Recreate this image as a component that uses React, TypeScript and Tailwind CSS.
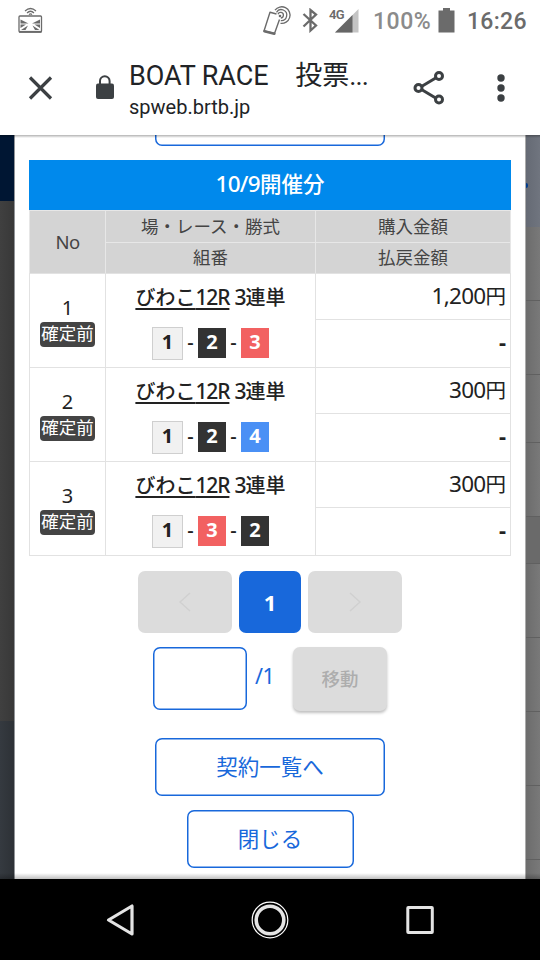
const bets = [
  { no: 1, boats: [1, 2, 3], amount: "1,200" },
  { no: 2, boats: [1, 2, 4], amount: "300" },
  { no: 3, boats: [1, 3, 2], amount: "300" },
];

const boatStyles: Record<number, string> = {
  1: "h-[33px] w-[31px] border border-[#cfcfcf] bg-[#f1f1f1] text-[#222]",
  2: "h-[30px] w-7 bg-[#333] text-white",
  3: "h-[30px] w-7 bg-[#f26161] text-white",
  4: "h-[30px] w-7 bg-[#4a90f5] text-white",
};

function StatusBar() {
  return (
    <div className="flex h-[42px] shrink-0 items-start font-['Roboto','Noto_Sans_CJK_JP',sans-serif] text-[#6b6b6b]">
      <svg className="mt-[7px] ml-[18px]" width="25" height="28" viewBox="0 0 25 28" fill="none" stroke="#6b6b6b">
        <path d="M7 4Q12.500-1 18 4M9 6Q12.500 2.500 16 6M11 7.700Q12.500 6.200 14 7.700" strokeWidth="1.200" />
        <rect x="1" y="9" width="22.500" height="16" rx="1" strokeWidth="1.300" />
        <path d="M2.500 12.500L10.500 16.500H2.500zM22 12.500L14 16.500H22zM2.500 17.500H8L2.500 21zM22 17.500H16.500L22 21zM3 23L10 18.500L7.500 23zM21.500 23L14.500 18.500L17 23z" fill="#6b6b6b" stroke="none" />
        <path d="M1 24.800H23.500" strokeWidth="1.800" />
      </svg>
      <svg className="mt-[5px] ml-[219px]" width="32" height="32" viewBox="0 0 32 32" fill="none" stroke="#6b6b6b">
        <path d="M14.500 9L8 7.300L2 26L12.500 28.500L17.500 14.500" strokeWidth="1.400" strokeLinejoin="round" />
        <path d="M2.500 26.300L12.300 28.800" strokeWidth="2.600" strokeLinecap="round" />
        <path d="M13 5.200A8.300 8.300 0 1 1 18.500 18.300M14.500 7.300A5.500 5.500 0 1 1 18.800 15.600M16 9.200A2.800 2.800 0 1 1 18.800 13" strokeWidth="1.300" />
        <circle cx="18" cy="11" r="1.300" fill="#6b6b6b" stroke="none" />
      </svg>
      <svg className="mt-2 ml-[8px]" width="17" height="25" viewBox="0 0 17 25" fill="none" stroke="#6b6b6b" strokeWidth="2.300">
        <path d="M1.500 6L14 17.500L8.500 22.500V2L14 6.500L1.500 18.500" />
      </svg>
      <span className="mt-[7px] ml-[10px] w-4 text-[13px] leading-[15px] font-semibold tracking-[-0.8px]">4G</span>
      <svg className="mt-[9px] -ml-[10px]" width="24" height="24" viewBox="0 0 24 24">
        <path d="M0 23.500L23.500 0V23.500z" fill="#c4c4c4" />
        <path d="M0 23.500L17.500 6V23.500z" fill="#666" />
      </svg>
      <span className="mt-2 ml-[14px] w-[59px] text-[23px] leading-7 font-medium tracking-[0.5px] text-[#8b8b8b]">100%</span>
      <svg className="mt-2 ml-[6px]" width="17" height="25" viewBox="0 0 17 25" fill="#6b6b6b">
        <path d="M5 0h7v2.500h4.500v22H.5v-22H5z" />
      </svg>
      <span className="mt-2 ml-3 text-[23px] leading-7 font-medium tracking-[0.3px]">16:26</span>
    </div>
  );
}

function BrowserBar() {
  return (
    <header className="flex h-[93px] shrink-0 font-['Roboto','Noto_Sans_CJK_JP',sans-serif] text-[#212326]">
      <svg className="mt-[33px] ml-[28px]" width="25" height="26" viewBox="0 0 25 26" stroke="#3c4043" strokeWidth="3.200">
        <path d="M2 2.500L23 23.500M23 2.500L2 23.500" />
      </svg>
      <svg className="mt-[32px] ml-[42px]" width="20" height="26" viewBox="0 0 20 26">
        <path d="M5 11V7a4.800 4.800 0 0 1 9.600 0V11" fill="none" stroke="#3c4043" strokeWidth="2" />
        <rect x="1" y="9.500" width="18" height="15.500" rx="2" fill="#3c4043" />
      </svg>
      <div className="mt-[16px] ml-[14px] w-[250px] whitespace-pre">
        <div className="h-9 text-[27px] leading-9 tracking-[-0.1px]">BOAT RACE　投票<span className="tracking-[-0.8px]">...</span></div>
        <div className="mt-px text-[20px] leading-6">spweb.brtb.jp</div>
      </div>
      <svg className="mt-[28px] ml-[34px]" width="32" height="36" viewBox="0 0 32 36" fill="none" stroke="#3c4043" strokeWidth="3">
        <path d="M6 18L26 6M6 18L26 30" />
        <circle cx="5.500" cy="18" r="3.500" fill="#fff" />
        <circle cx="26" cy="6" r="3.500" fill="#fff" />
        <circle cx="26" cy="29.500" r="3.500" fill="#fff" />
      </svg>
      <svg className="mt-[31px] ml-[51px]" width="10" height="30" viewBox="0 0 10 30" fill="#3c4043">
        <circle cx="5" cy="5" r="3.700" />
        <circle cx="5" cy="15" r="3.700" />
        <circle cx="5" cy="25" r="3.700" />
      </svg>
    </header>
  );
}

function BetTable() {
  return (
    <div className="grid grid-cols-[76px_210px_196px] text-[#222]">
      <h2 className="col-span-3 h-[50px] bg-[#0089ec] text-center text-[21.500px] leading-[47px] font-medium text-white">
        <span className="text-[22.500px] tracking-[-0.7px]">10/9</span>開催分
      </h2>
      <div className="row-span-2 border-t border-l border-[#e7e7e7] bg-[#d4d4d4] text-center text-[18.500px] leading-[61px] tracking-[-0.7px] text-[#444]">
        No
      </div>
      <div className="h-8 border-t border-l border-[#e7e7e7] bg-[#d4d4d4] text-center text-[17.500px] leading-[30px] text-[#444]">
        場・レース・勝式
      </div>
      <div className="h-8 border-x border-t border-[#e7e7e7] bg-[#d4d4d4] text-center text-[17.500px] leading-[30px] text-[#444]">
        購入金額
      </div>
      <div className="h-[31px] border-t border-l border-[#e7e7e7] bg-[#d4d4d4] text-center text-[17.500px] leading-[28px] text-[#444]">
        組番
      </div>
      <div className="h-[31px] border-x border-t border-[#e7e7e7] bg-[#d4d4d4] text-center text-[17.500px] leading-[28px] text-[#444]">
        払戻金額
      </div>
      {bets.map((bet) => (
        <BetRow key={bet.no} {...bet} />
      ))}
      <div className="col-span-3 h-px bg-[#e2e2e2]" />
    </div>
  );
}

function BetRow({ no, boats, amount }: { no: number; boats: number[]; amount: string }) {
  return (
    <>
      <div className="flex h-[94px] flex-col items-center border-t border-l border-[#e2e2e2] pt-[21px]">
        <span className="h-[26px] text-[20px] leading-[26px]">{no}</span>
        <span className="mt-px h-[25px] w-[55px] rounded-[4px] bg-[#444] text-center text-[17.500px] leading-[23px] whitespace-nowrap text-white">
          確定前
        </span>
      </div>
      <div className="flex h-[94px] flex-col items-center border-t border-l border-[#e2e2e2] pt-2">
        <div className="h-8 text-[20px] leading-[31px] font-medium whitespace-nowrap">
          <span className="underline decoration-2 underline-offset-[3px]">
            びわこ<span className="text-[21px] tracking-[-1.1px]">12R</span>
          </span>{" "}
          <span className="text-[21px] tracking-[-1px]">3</span>連単
        </div>
        <div className="mt-[12px] flex h-[34px] items-center text-[20px] font-medium">
          {boats.map((boat, i) => (
            <div key={boat} className="flex items-center">
              {i > 0 && <span className="w-[15px] pb-[3px] text-center leading-7">-</span>}
              <span className={"flex items-center justify-center pb-[3px] leading-7 font-bold " + boatStyles[boat]}>
                {boat}
              </span>
            </div>
          ))}
        </div>
      </div>
      <div className="h-[94px] border-x border-t border-[#e2e2e2] text-right">
        <div className="h-[46px] border-b border-[#e2e2e2] pr-1 text-[20.500px] leading-[43px]">
          <span className="text-[22.500px] tracking-[-0.7px]">{amount}</span>円
        </div>
        <div className="pr-1 text-[22px] leading-[43px] font-bold">-</div>
      </div>
    </>
  );
}

function Pager() {
  return (
    <>
      <div className="mt-[15px] flex justify-center gap-[7px]">
        <button className="flex h-[62px] w-[94px] items-center justify-center rounded-[7px] bg-[#dcdcdc]">
          <svg width="12" height="20" viewBox="0 0 12 20" fill="none" stroke="#d0d0d0" strokeWidth="1.500">
            <path d="M11 1L1 10L11 19" />
          </svg>
        </button>
        <button className="h-[62px] w-[62px] rounded-[7px] bg-[#1868db] text-[22px] leading-[59px] font-bold text-white">1</button>
        <button className="flex h-[62px] w-[94px] items-center justify-center rounded-[7px] bg-[#dcdcdc]">
          <svg width="12" height="20" viewBox="0 0 12 20" fill="none" stroke="#d0d0d0" strokeWidth="1.500">
            <path d="M1 1L11 10L1 19" />
          </svg>
        </button>
      </div>
      <div className="mt-[14px] flex justify-center">
        <input className="h-[63px] w-[94px] rounded-[7px] bg-white shadow-[inset_0_0_0_1.5px_#1868db]" />
        <span className="w-[46px] pl-2 text-[21.500px] leading-[58px] tracking-[-0.5px] text-[#1868db]">/1</span>
        <button className="h-[64px] w-[94px] rounded-[7px] bg-[#dcdcdc] text-[18.500px] leading-[58px] font-medium text-[#adadad] shadow-[0_2px_3px_rgba(0,0,0,0.25)]">
          移動
        </button>
      </div>
    </>
  );
}

function NavBar() {
  return (
    <nav className="flex h-[81px] shrink-0 items-center justify-center gap-[110px] bg-black">
      <svg width="40" height="40" viewBox="0 0 40 40" fill="none" stroke="#e4e4e4" strokeWidth="3.200" strokeLinejoin="round">
        <path d="M8.500 20L32 6V34z" />
      </svg>
      <svg width="40" height="40" viewBox="0 0 40 40" fill="none">
        <circle cx="20" cy="20" r="17.800" stroke="#fff" strokeWidth="1.200" />
        <circle cx="20" cy="20" r="13.800" stroke="#e4e4e4" strokeWidth="3.600" />
      </svg>
      <svg width="40" height="40" viewBox="0 0 40 40" fill="none" stroke="#e4e4e4" strokeWidth="3">
        <rect x="7.800" y="7.500" width="24.500" height="25" rx="0.500" />
      </svg>
    </nav>
  );
}

export default function App() {
  return (
    <div className="flex h-[960px] w-[540px] flex-col overflow-hidden bg-white">
      <StatusBar />
      <BrowserBar />
      <main className="relative flex h-[744px] shrink-0 overflow-hidden font-['Noto_Sans','Noto_Sans_CJK_JP',sans-serif]">
        <div className="flex w-[15px] flex-col border-r border-[#929599]">
          <div className="h-[66px] bg-[#001633]" />
          <div className="h-[520px] bg-linear-to-r from-[#404040] to-[#383838]" />
          <div className="flex-1 bg-linear-to-r from-[#353a40] to-[#2d3136]" />
        </div>
        <div className="flex w-[510px] flex-col pr-[14px] pl-[14px]">
          <div className="mx-auto h-[11px] w-[230px] overflow-hidden">
            <div className="-mt-[47px] h-[58px] rounded-[7px] shadow-[inset_0_0_0_1.5px_#1868db]" />
          </div>
          <div className="h-[14px]" />
          <BetTable />
          <Pager />
          <button className="mx-auto mt-[27px] h-[58px] w-[230px] shrink-0 rounded-[7px] text-[21.500px] leading-[54px] text-[#1868db] shadow-[inset_0_0_0_1.5px_#1868db]">
            契約一覧へ
          </button>
          <button className="mx-auto mt-[14px] h-[58px] w-[167px] shrink-0 rounded-[7px] text-[21.500px] leading-[54px] text-[#1868db] shadow-[inset_0_0_0_1.5px_#1868db]">
            閉じる
          </button>
        </div>
        <div className="flex w-[15px] flex-col border-l border-[#aaa] bg-linear-to-r from-[#6c6c6c] to-[#797979]">
          <div className="h-[92px] bg-linear-to-r from-[#656a74] to-[#70757f] pt-[48px]">
            <div className="h-[5px] w-[2px] rounded-r bg-[#003c8c]" />
          </div>
          <div className="h-[74px] border-b border-[#606060]" />
          <div className="h-[74px] border-b border-[#606060]" />
          <div className="h-[68px] border-b border-[#606060]" />
          <div className="h-[74px] border-b border-[#606060]" />
          <div className="h-[47px] border-b border-[#606060] bg-[#6a6a6a]" />
          <div className="h-[74px] border-b border-[#606060]" />
          <div className="h-[74px] border-b border-[#606060]" />
          <div className="h-[74px] border-b border-[#606060]" />
          <div className="h-[74px] border-b border-[#606060]" />
        </div>
        <div className="absolute inset-x-0 top-0 h-[3px] bg-linear-to-b from-black/30 to-transparent" />
        <div className="absolute inset-x-0 bottom-0 h-[6px] bg-linear-to-t from-black/25 to-transparent" />
      </main>
      <NavBar />
    </div>
  );
}
